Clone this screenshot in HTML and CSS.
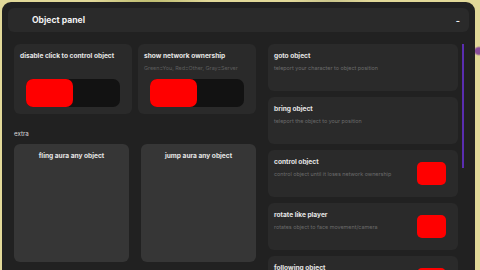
FILE: index.html
```html
<!DOCTYPE html>
<html>
<head>
<meta charset="utf-8">
<link rel="stylesheet" href="styles.css">
</head>
<body>
<div class="scene">
  <div class="panel">
    <div class="header">
      <span class="header-title">Object panel</span>
      <span class="header-min">-</span>
    </div>
    <div class="content">
      <div class="left">
        <div class="toggle-row">
          <div class="card">
            <div class="card-title">disable click to control object</div>
            <div class="track"><div class="knob"></div></div>
          </div>
          <div class="card">
            <div class="card-title">show network ownership</div>
            <div class="card-sub">Green=You, Red=Other, Gray=Server</div>
            <div class="track"><div class="knob"></div></div>
          </div>
        </div>
        <div class="section-label">extra</div>
        <div class="aura-row">
          <div class="aura">fling aura any object</div>
          <div class="aura">jump aura any object</div>
        </div>
      </div>
      <div class="right">
        <div class="list">
          <div class="item">
            <div class="item-text">
              <div class="item-title">goto object</div>
              <div class="item-desc">teleport your character to object position</div>
            </div>
          </div>
          <div class="item">
            <div class="item-text">
              <div class="item-title">bring object</div>
              <div class="item-desc">teleport the object to your position</div>
            </div>
          </div>
          <div class="item">
            <div class="item-text">
              <div class="item-title">control object</div>
              <div class="item-desc">control object until it loses network ownership</div>
            </div>
            <div class="switch"></div>
          </div>
          <div class="item">
            <div class="item-text">
              <div class="item-title">rotate like player</div>
              <div class="item-desc">rotates object to face movement/camera</div>
            </div>
            <div class="switch"></div>
          </div>
          <div class="item">
            <div class="item-text">
              <div class="item-title">following object</div>
              <div class="item-desc">object follows your character</div>
            </div>
            <div class="switch"></div>
          </div>
        </div>
        <div class="scrolltrack"><div class="thumb"></div></div>
      </div>
    </div>
  </div>
</div>
</body>
</html>
```

FILE: styles.css
```css
* { box-sizing: border-box; }
html, body { margin: 0; padding: 0; }
body {
  width: 480px;
  height: 270px;
  overflow: hidden;
  font-family: "Inter", "Noto Sans", sans-serif;
  background:
    linear-gradient(135deg, rgba(0,0,0,0) 0 0) ,
    radial-gradient(ellipse 6px 5px at 479px 51px, #8a4f9a 0%, #8a4f9a 60%, rgba(138,79,154,0) 100%),
    radial-gradient(ellipse 60px 14px at 150px 4px, #b9b86a 0%, rgba(185,184,106,0) 100%),
    radial-gradient(ellipse 40px 10px at 330px 2px, #c9c48a 0%, rgba(201,196,138,0) 100%),
    #e2d999;
}
.scene {
  padding: 2px 5px 0 2px;
}
.panel {
  width: 473px;
  height: 300px;
  background: #212121;
  border-radius: 9px;
  padding: 6px;
}
.header {
  height: 24px;
  background: #2a2a2a;
  border-radius: 6px;
  display: flex;
  align-items: center;
  justify-content: space-between;
  padding: 0 9px 0 24px;
}
.header-title {
  color: #f2f2f2;
  font-size: 8.6px;
  font-weight: 700;
}
.header-min {
  color: #f2f2f2;
  font-size: 9px;
  font-weight: 700;
}
.content {
  display: flex;
  margin-top: 12px;
  padding-left: 6px;
  gap: 12px;
}
.left {
  width: 242px;
  display: flex;
  flex-direction: column;
}
.toggle-row {
  display: flex;
  gap: 6px;
}
.card {
  width: 118px;
  height: 70px;
  background: #2a2a2a;
  border-radius: 6px;
  padding: 8px 6px 0 6px;
  position: relative;
}
.card-title {
  color: #e6e6e6;
  font-size: 6.6px;
  font-weight: 700;
  line-height: 9px;
}
.card-sub {
  color: #5e5e5e;
  font-size: 5.4px;
  line-height: 8px;
  margin-top: 3px;
}
.track {
  position: absolute;
  left: 12px;
  top: 35px;
  width: 94px;
  height: 28px;
  background: #121212;
  border-radius: 7px;
}
.knob {
  width: 47px;
  height: 28px;
  background: #ff0000;
  border-radius: 7px;
}
.section-label {
  color: #dcdcdc;
  font-size: 6.2px;
  line-height: 8px;
  margin-top: 16px;
  height: 8px;
}
.aura-row {
  display: flex;
  gap: 12px;
  margin-top: 6px;
}
.aura {
  width: 115px;
  height: 118px;
  background: #363636;
  border-radius: 6px;
  color: #e6e6e6;
  font-size: 6.6px;
  font-weight: 700;
  text-align: center;
  padding-top: 8px;
  line-height: 9px;
}
.right {
  display: flex;
  gap: 4px;
}
.list {
  width: 190px;
  display: flex;
  flex-direction: column;
  gap: 6px;
}
.item {
  height: 47px;
  background: #2a2a2a;
  border-radius: 6px;
  padding: 8px 12px 0 6px;
  display: flex;
  justify-content: space-between;
  flex-shrink: 0;
}
.item-title {
  color: #e6e6e6;
  font-size: 6.6px;
  font-weight: 700;
  line-height: 9px;
}
.item-desc {
  color: #6a6a6a;
  font-size: 5.4px;
  line-height: 8px;
  margin-top: 3px;
}
.switch {
  width: 29px;
  height: 23px;
  background: #ff0000;
  border-radius: 5px;
  margin-top: 4px;
}
.scrolltrack {
  width: 3px;
  height: 230px;
}
.thumb {
  width: 2px;
  height: 124px;
  background: #5a2db0;
}
```
